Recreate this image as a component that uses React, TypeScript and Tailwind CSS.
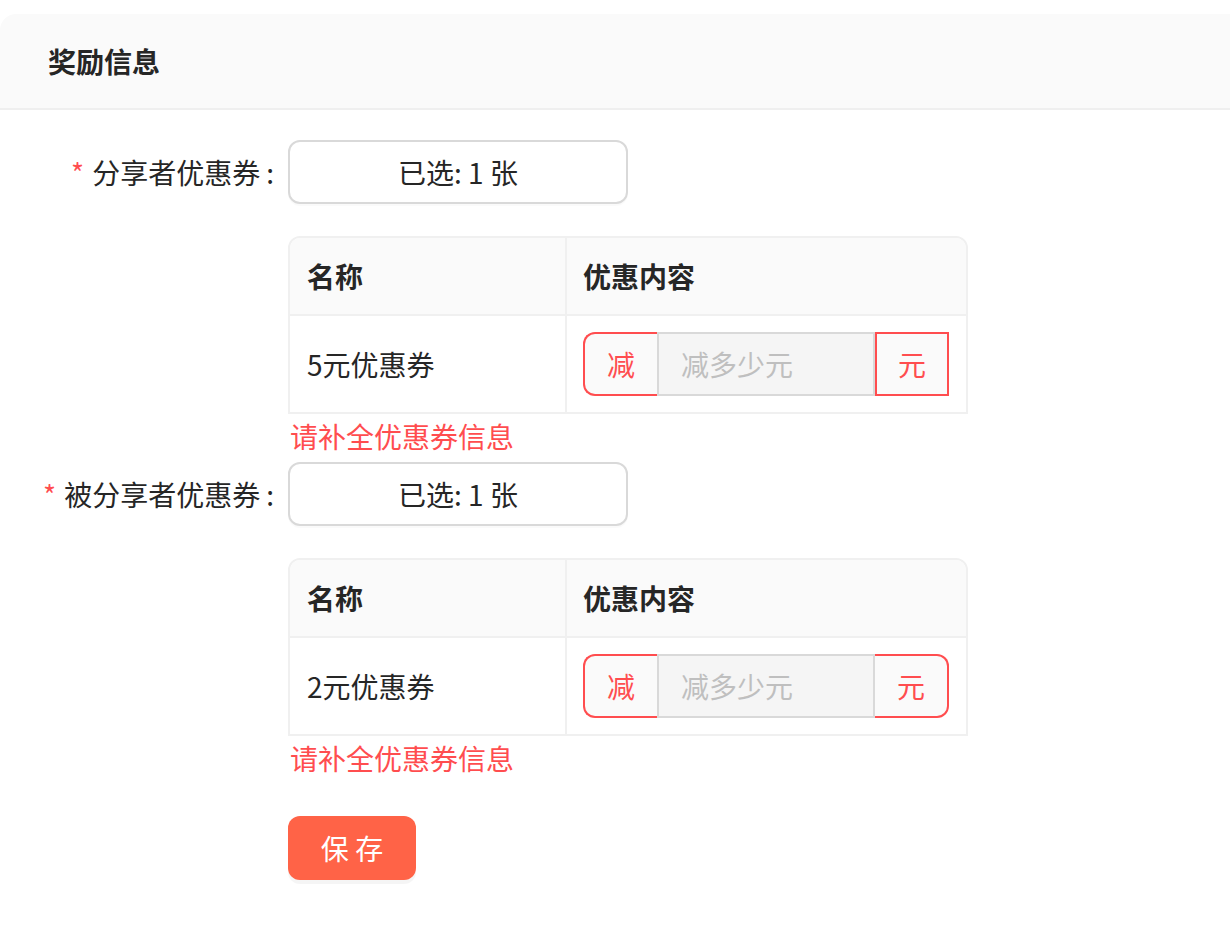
import React from "react";

const font = { fontFamily: '"Noto Sans CJK SC", "Noto Sans", sans-serif' };

function FormLabel({ text }: { text: string }) {
  return (
    <div className="w-[288px] shrink-0 flex items-center justify-end pr-[14px] text-[28px] text-[#262626]">
      <span className="text-[#ff4d4f] mr-[8px] text-[28px]">*</span>
      <span>{text}</span>
      <span className="ml-[6px]">:</span>
    </div>
  );
}

function CouponTable({ name, squareRight }: { name: string; squareRight?: boolean }) {
  return (
    <div className="w-[680px] border-2 border-[#f0f0f0] rounded-t-[12px] overflow-hidden text-[28px] text-[#262626]">
      <div className="flex h-[78px] bg-[#fafafa] border-b-2 border-[#f0f0f0] font-semibold">
        <div className="w-[277px] border-r-2 border-[#f0f0f0] flex items-center pl-[17px]">名称</div>
        <div className="flex-1 flex items-center pl-[16px]">优惠内容</div>
      </div>
      <div className="flex h-[96px]">
        <div className="w-[277px] border-r-2 border-[#f0f0f0] flex items-center pl-[17px]">{name}</div>
        <div className="flex-1 flex items-center pl-[16px]">
          <div className="flex h-[64px]">
            <div className="w-[74px] flex items-center justify-center bg-[#fafafa] border-2 border-r-0 border-[#ff4d4f] rounded-l-[12px] text-[#ff4d4f]">
              减
            </div>
            <div className="w-[218px] flex items-center pl-[22px] bg-[#f5f5f5] border-2 border-[#d9d9d9] text-[#bfbfbf]">
              减多少元
            </div>
            <div
              className={
                squareRight
                  ? "w-[74px] flex items-center justify-center bg-[#fafafa] border-2 border-[#ff4d4f] text-[#ff4d4f]"
                  : "w-[74px] flex items-center justify-center bg-[#fafafa] border-2 border-l-0 border-[#ff4d4f] rounded-r-[12px] text-[#ff4d4f]"
              }
            >
              元
            </div>
          </div>
        </div>
      </div>
    </div>
  );
}

function CouponField({ label, name, squareRight }: { label: string; name: string; squareRight?: boolean }) {
  return (
    <div>
      <div className="flex items-center">
        <FormLabel text={label} />
        <button className="w-[340px] h-[64px] border-2 border-[#d9d9d9] rounded-[12px] bg-white text-[28px] text-[#262626] shadow-[0_2px_0_rgba(0,0,0,0.02)]">
          已选: 1 张
        </button>
      </div>
      <div className="pl-[288px] mt-[32px]">
        <CouponTable name={name} squareRight={squareRight} />
        <div className="text-[#ff4d4f] text-[28px] leading-[44px] pl-[2px]">请补全优惠券信息</div>
      </div>
    </div>
  );
}

export default function App() {
  return (
    <div className="min-h-screen bg-white pt-[14px]" style={font}>
      <div className="h-[96px] bg-[#fafafa] rounded-tl-[16px] border-b-2 border-[#efefef] flex items-center pl-[48px]">
        <h2 className="text-[28px] font-bold text-[#262626]">奖励信息</h2>
      </div>
      <div className="pt-[30px]">
        <CouponField label="分享者优惠券" name="5元优惠券" squareRight />
        <div className="mt-[4px]">
          <CouponField label="被分享者优惠券" name="2元优惠券" />
        </div>
        <div className="pl-[288px] mt-[36px]">
          <button className="w-[128px] h-[64px] rounded-[12px] bg-[#ff6347] text-white text-[28px] shadow-[0_4px_0_rgba(0,0,0,0.04)]">
            保 存
          </button>
        </div>
      </div>
    </div>
  );
}
